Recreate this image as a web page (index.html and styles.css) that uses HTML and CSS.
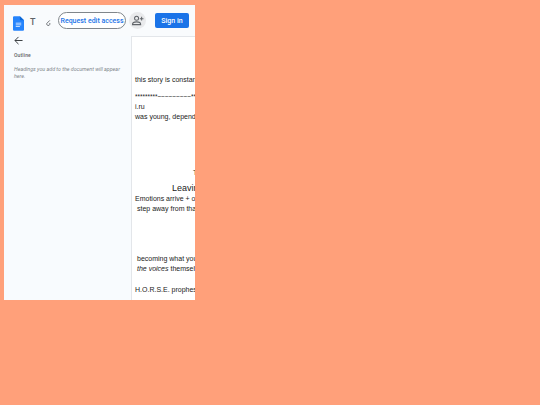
FILE: index.html
```html
<!DOCTYPE html>
<html lang="en">
<head>
<meta charset="utf-8">
<title>Document</title>
<link rel="stylesheet" href="styles.css">
</head>
<body>
<div class="app">
  <header class="topbar">
    <svg class="logo" viewBox="0 0 12 16" width="12" height="16"><path d="M1.2 0H7.5L12 4.5V14.8a1.2 1.2 0 0 1-1.2 1.2H1.2A1.2 1.2 0 0 1 0 14.800V1.200A1.200 1.200 0 0 1 1.200 0Z" fill="#2684fc"/><path d="M7.500 0 12 4.500H8.700A1.200 1.200 0 0 1 7.500 3.300Z" fill="#0c67d6"/><path d="M3 7.200H9V8H3ZM3 9H9V9.800H3ZM3 10.800H7.500V11.600H3Z" fill="#f4f8ff"/></svg>
    <span class="tool-t">T</span>
    <svg class="tool-edit" viewBox="0 0 8 8" width="7" height="8"><path d="M5.500 1 2 4.500A1.800 1.800 0 1 0 5.500 5.500V4" fill="none" stroke="#5f6368" stroke-width="1"/></svg>
    <button class="request">Request edit access</button>
    <span class="share"><svg viewBox="0 0 14 12" width="13" height="11"><circle cx="6" cy="3.500" r="2.200" fill="none" stroke="#5f6368" stroke-width="1.100"/><path d="M1.500 10.500c0-2 2-3 4.500-3s4.500 1 4.500 3Z" fill="none" stroke="#5f6368" stroke-width="1.100"/><path d="M11.500 2v4M9.500 4h4" stroke="#5f6368" stroke-width="1.100"/></svg></span>
    <button class="signin">Sign in</button>
  </header>
  <div class="content">
    <aside class="outline">
      <svg class="back" viewBox="0 0 10 10" width="9" height="9"><path d="M9.500 5H1M5 1 1 5l4 4" fill="none" stroke="#3c4043" stroke-width="1.100"/></svg>
      <div class="outline-title">Outline</div>
      <p class="outline-hint">Headings you add to the document will appear here.</p>
    </aside>
    <main class="page">
      <p class="line l1">this story is constantly shifting and changing</p>
      <p class="line l2">*********~~~~~~~~~*********</p>
      <p class="line l3">i.ru</p>
      <p class="line l4">was young, dependent on others for everything</p>
      <p class="line l5 centered">T</p>
      <p class="line l6 heading">Leaving the place</p>
      <p class="line l7">Emotions arrive + overwhelm, then they pass</p>
      <p class="line l8">step away from that, and look at it again</p>
      <p class="line l9">becoming what you have always been afraid of</p>
      <p class="line l10"><em>the voices</em> themselves are not the problem here</p>
      <p class="line l11">H.O.R.S.E. prophesized the end of the story</p>
    </main>
  </div>
</div>
</body>
</html>
```
FILE: styles.css
```css
* { box-sizing: border-box; }
html, body { margin: 0; height: 100%; }
body {
  background: #ffa07a;
  font-family: Roboto, "Liberation Sans", Arial, sans-serif;
  overflow: hidden;
  padding: 5px 0 0 4px;
}
.app {
  width: 191px;
  height: 295px;
  background: #f8fbfe;
  display: flex;
  flex-direction: column;
  overflow: hidden;
}
.topbar {
  height: 31px;
  flex: none;
  display: flex;
  align-items: center;
  background: #fff;
  background: #f9fbfd;
  padding: 0 0 0 9px;
}
.logo { flex: none; margin-top: 5px; width: 11px; height: 15px; }
.tool-t { font: 500 9px Roboto, sans-serif; color: #5f6368; margin: 0 0 0 6px; width: 5px; padding-top: 2px; }
.tool-edit { margin: 4px 0 0 10px; flex: none; }
.request {
  margin: 0 0 0 6px;
  width: 68px;
  height: 17px;
  padding: 0;
  border: 1px solid #80868b;
  border-radius: 9px;
  background: #fff;
  color: #1a73e8;
  font: 500 7px Roboto, sans-serif;
  white-space: nowrap;
}
.share {
  flex: none;
  width: 17px;
  height: 17px;
  margin-left: 3px;
  border-radius: 50%;
  background: #e9eaec;
  display: flex;
  align-items: center;
  justify-content: center;
}
.signin {
  margin-left: 9px;
  width: 34px;
  height: 15px;
  border: 0;
  padding: 0;
  border-radius: 2px;
  background: #1a73e8;
  color: #fff;
  font: 500 7px Roboto, sans-serif;
}
.content { flex: 1; display: flex; min-height: 0; }
.outline { width: 127px; flex: none; padding: 0 10px; }
.back { display: block; margin-top: 0; }
.outline-title { font: 500 5px/6px Roboto, sans-serif; color: #5f6368; margin-top: 7px; letter-spacing: .15px; }
.outline-hint { font: italic 5.3px/7px Roboto, sans-serif; color: #80868b; margin: 8px 0 0; }
.page {
  flex: 1;
  min-width: 0;
  background: #fff;
  border-left: 1px solid #e3e6ea;
  border-top: 1px solid #e3e6ea;
  overflow: hidden;
  padding-top: 39px;
  font-family: "Liberation Sans", Arial, sans-serif;
  font-size: 7px;
  line-height: 8px;
  color: #222;
}
.line { margin: 0; padding-left: 3px; white-space: nowrap; }
.l2 { margin-top: 9px; font-size: 6.400px; }
.l3 { margin-top: 2px; }
.l4 { margin-top: 2px; }
.l5 { margin-top: 48px; padding-left: 61px; }
.l6 { margin-top: 6px; padding-left: 40px; font-size: 9px; line-height: 10px; }
.l7 { margin-top: 2px; }
.l8 { margin-top: 2px; padding-left: 5px; }
.l9 { margin-top: 42px; padding-left: 5px; }
.l10 { margin-top: 2px; padding-left: 5px; }
.l11 { margin-top: 13px; }
```
